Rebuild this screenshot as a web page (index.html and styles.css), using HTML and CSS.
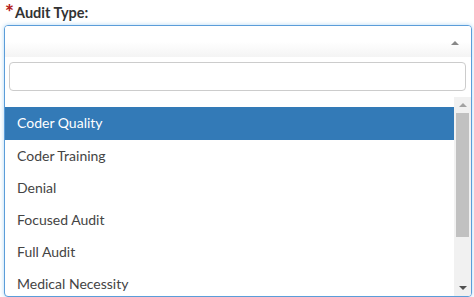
FILE: index.html
```html
<!DOCTYPE html>
<html>
<head>
<meta charset="utf-8">
<link rel="stylesheet" href="styles.css">
</head>
<body>
<div class="field">
  <label class="label"><span class="req">*</span>Audit Type:</label>
  <div class="select">
    <div class="choice"><span class="caret"></span></div>
    <div class="search"><input class="search-input" type="text"></div>
    <div class="results">
      <ul class="options">
        <li class="option active">Coder Quality</li>
        <li class="option">Coder Training</li>
        <li class="option">Denial</li>
        <li class="option">Focused Audit</li>
        <li class="option">Full Audit</li>
        <li class="option">Medical Necessity</li>
      </ul>
      <div class="scrollbar">
        <div class="sb-btn"><span class="sb-up"></span></div>
        <div class="sb-track"><div class="sb-thumb"></div></div>
        <div class="sb-btn"><span class="sb-down"></span></div>
      </div>
    </div>
  </div>
</div>
</body>
</html>
```

FILE: styles.css
```css
html, body {
  margin: 0;
  padding: 0;
  background: #fff;
  overflow: hidden;
}
body {
  font-family: Lato, "Noto Sans", sans-serif;
  color: #333;
  width: 474px;
  height: 297px;
}
.field {
  display: flex;
  flex-direction: column;
}
.label {
  display: flex;
  align-items: flex-start;
  height: 25px;
  padding-left: 5px;
  font-weight: 700;
  font-size: 14.5px;
  line-height: 26px;
  color: #333;
}
.req {
  display: inline-block;
  width: 10px;
  color: #b52020;
  font-size: 21px;
  font-weight: 900;
  line-height: 24px;
}
.select {
  margin-left: 4px;
  width: 466px;
  height: 270px;
  border: 1px solid #5b9dd9;
  border-radius: 4px;
  box-shadow: 0 0 4px rgba(82, 168, 236, 0.45);
  display: flex;
  flex-direction: column;
  background: #fff;
  overflow: hidden;
}
.choice {
  height: 31px;
  flex: none;
  display: flex;
  align-items: center;
  justify-content: flex-end;
  padding-right: 12px;
  background: linear-gradient(to bottom, #fff 0%, #fff 50%, #f4f4f4 100%);
}
.caret {
  width: 0;
  height: 0;
  border-left: 4px solid transparent;
  border-right: 4px solid transparent;
  border-bottom: 4px solid #888;
  margin-top: 2px;
}
.search {
  flex: none;
  padding: 5px 5px 0 4px;
}
.search-input {
  display: block;
  box-sizing: border-box;
  width: 100%;
  height: 29px;
  margin: 0;
  border: 1px solid #ccc;
  border-radius: 4px;
  outline: none;
  background: #fff;
  font-family: inherit;
}
.results {
  flex: 1;
  display: flex;
  margin-top: 6px;
  min-height: 0;
}
.options {
  list-style: none;
  margin: 0;
  padding: 10px 0 0 0;
  flex: 1;
  overflow: hidden;
}
.option {
  height: 32px;
  line-height: 31px;
  padding-left: 12px;
  font-size: 14px;
  color: #444;
}
.option.active {
  height: 33px;
  line-height: 32px;
  background: #337ab7;
  color: #fff;
}
.scrollbar {
  width: 17px;
  flex: none;
  background: #f1f1f1;
  display: flex;
  flex-direction: column;
}
.sb-btn {
  height: 16px;
  flex: none;
  display: flex;
  align-items: center;
  justify-content: center;
}
.sb-up {
  width: 0;
  height: 0;
  border-left: 4px solid transparent;
  border-right: 4px solid transparent;
  border-bottom: 4px solid #a3a3a3;
}
.sb-down {
  width: 0;
  height: 0;
  border-left: 4px solid transparent;
  border-right: 4px solid transparent;
  border-top: 4px solid #505050;
}
.sb-track {
  flex: 1;
  padding: 0 2px;
}
.sb-thumb {
  height: 124px;
  background: #c1c1c1;
}
```
